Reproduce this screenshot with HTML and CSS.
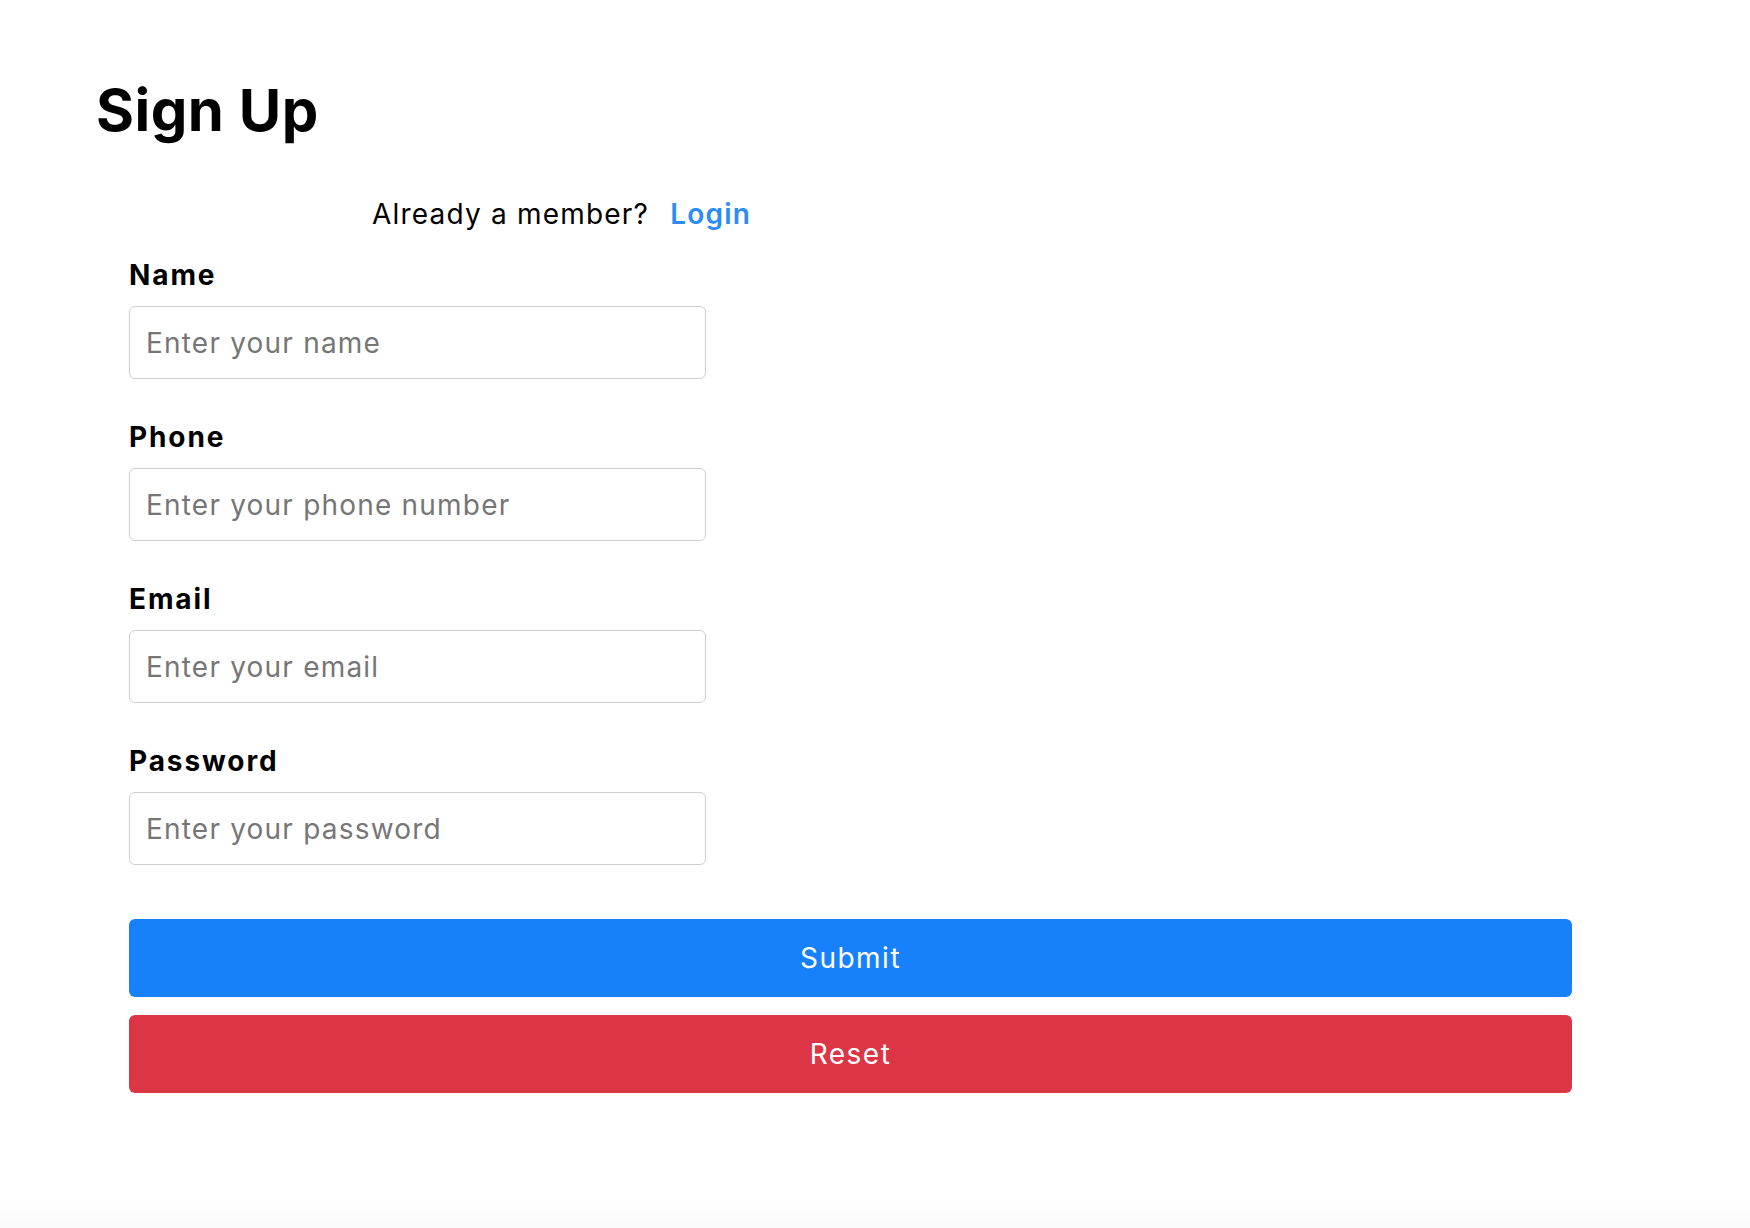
FILE: index.html
```html
<!DOCTYPE html>
<html lang="en">
<head>
<meta charset="utf-8">
<title>Sign Up</title>
<link rel="stylesheet" href="styles.css">
</head>
<body>
<main class="page">
  <h1 class="title">Sign Up</h1>
  <p class="member">Already a member? <a class="login" href="#">Login</a></p>
  <form class="form">
    <div class="field">
      <label class="label" for="name">Name</label>
      <input class="input" id="name" type="text" placeholder="Enter your name">
    </div>
    <div class="field">
      <label class="label" for="phone">Phone</label>
      <input class="input" id="phone" type="tel" placeholder="Enter your phone number">
    </div>
    <div class="field">
      <label class="label" for="email">Email</label>
      <input class="input" id="email" type="email" placeholder="Enter your email">
    </div>
    <div class="field">
      <label class="label" for="password">Password</label>
      <input class="input" id="password" type="password" placeholder="Enter your password">
    </div>
    <div class="actions">
      <button class="btn btn-submit" type="submit">Submit</button>
      <button class="btn btn-reset" type="reset">Reset</button>
    </div>
  </form>
</main>
</body>
</html>
```
FILE: styles.css
```css
* { box-sizing: border-box; }

html, body {
  margin: 0;
  padding: 0;
  background: #ffffff;
}

body {
  font-family: "Inter", "Liberation Sans", sans-serif;
  color: #000;
}

.page {
  height: 1228px;
  overflow: hidden;
  padding-top: 81px;
  background: linear-gradient(to bottom, #ffffff 0, #ffffff calc(100% - 26px), #fafafa 100%);
}

.title {
  margin: 0 0 0 96px;
  font-size: 58px;
  line-height: 58px;
  font-weight: 700;
  letter-spacing: 0.5px;
}

.member {
  margin: 61px 0 0 372px;
  font-size: 28px;
  line-height: 28px;
  font-weight: 400;
  letter-spacing: 1.2px;
}

.login {
  color: #2b8cf7;
  font-weight: 600;
  text-decoration: none;
  margin-left: 12px;
}

.form {
  margin: 33px 0 0 129px;
  width: 1443px;
  display: flex;
  flex-direction: column;
}

.field {
  display: flex;
  flex-direction: column;
  gap: 17px;
  margin-bottom: 44px;
}

.label {
  font-size: 28px;
  line-height: 28px;
  font-weight: 700;
  letter-spacing: 1.9px;
}

.input {
  width: 577px;
  height: 73px;
  border: 1px solid #cfcfcf;
  border-radius: 6px;
  padding: 0 16px;
  font-family: "Inter", "Liberation Sans", sans-serif;
  font-size: 28px;
  letter-spacing: 1.2px;
  color: #222;
  background: #fff;
  outline: none;
}

.input::placeholder {
  color: #767676;
}

.actions {
  margin-top: 10px;
  display: flex;
  flex-direction: column;
  gap: 18px;
}

.btn {
  height: 78px;
  width: 100%;
  border: none;
  border-radius: 6px;
  font-family: "Inter", "Liberation Sans", sans-serif;
  font-size: 28px;
  letter-spacing: 1.5px;
  color: #fff;
  cursor: pointer;
}

.btn-submit { background: #1780fb; }
.btn-reset { background: #dc3545; }
```
